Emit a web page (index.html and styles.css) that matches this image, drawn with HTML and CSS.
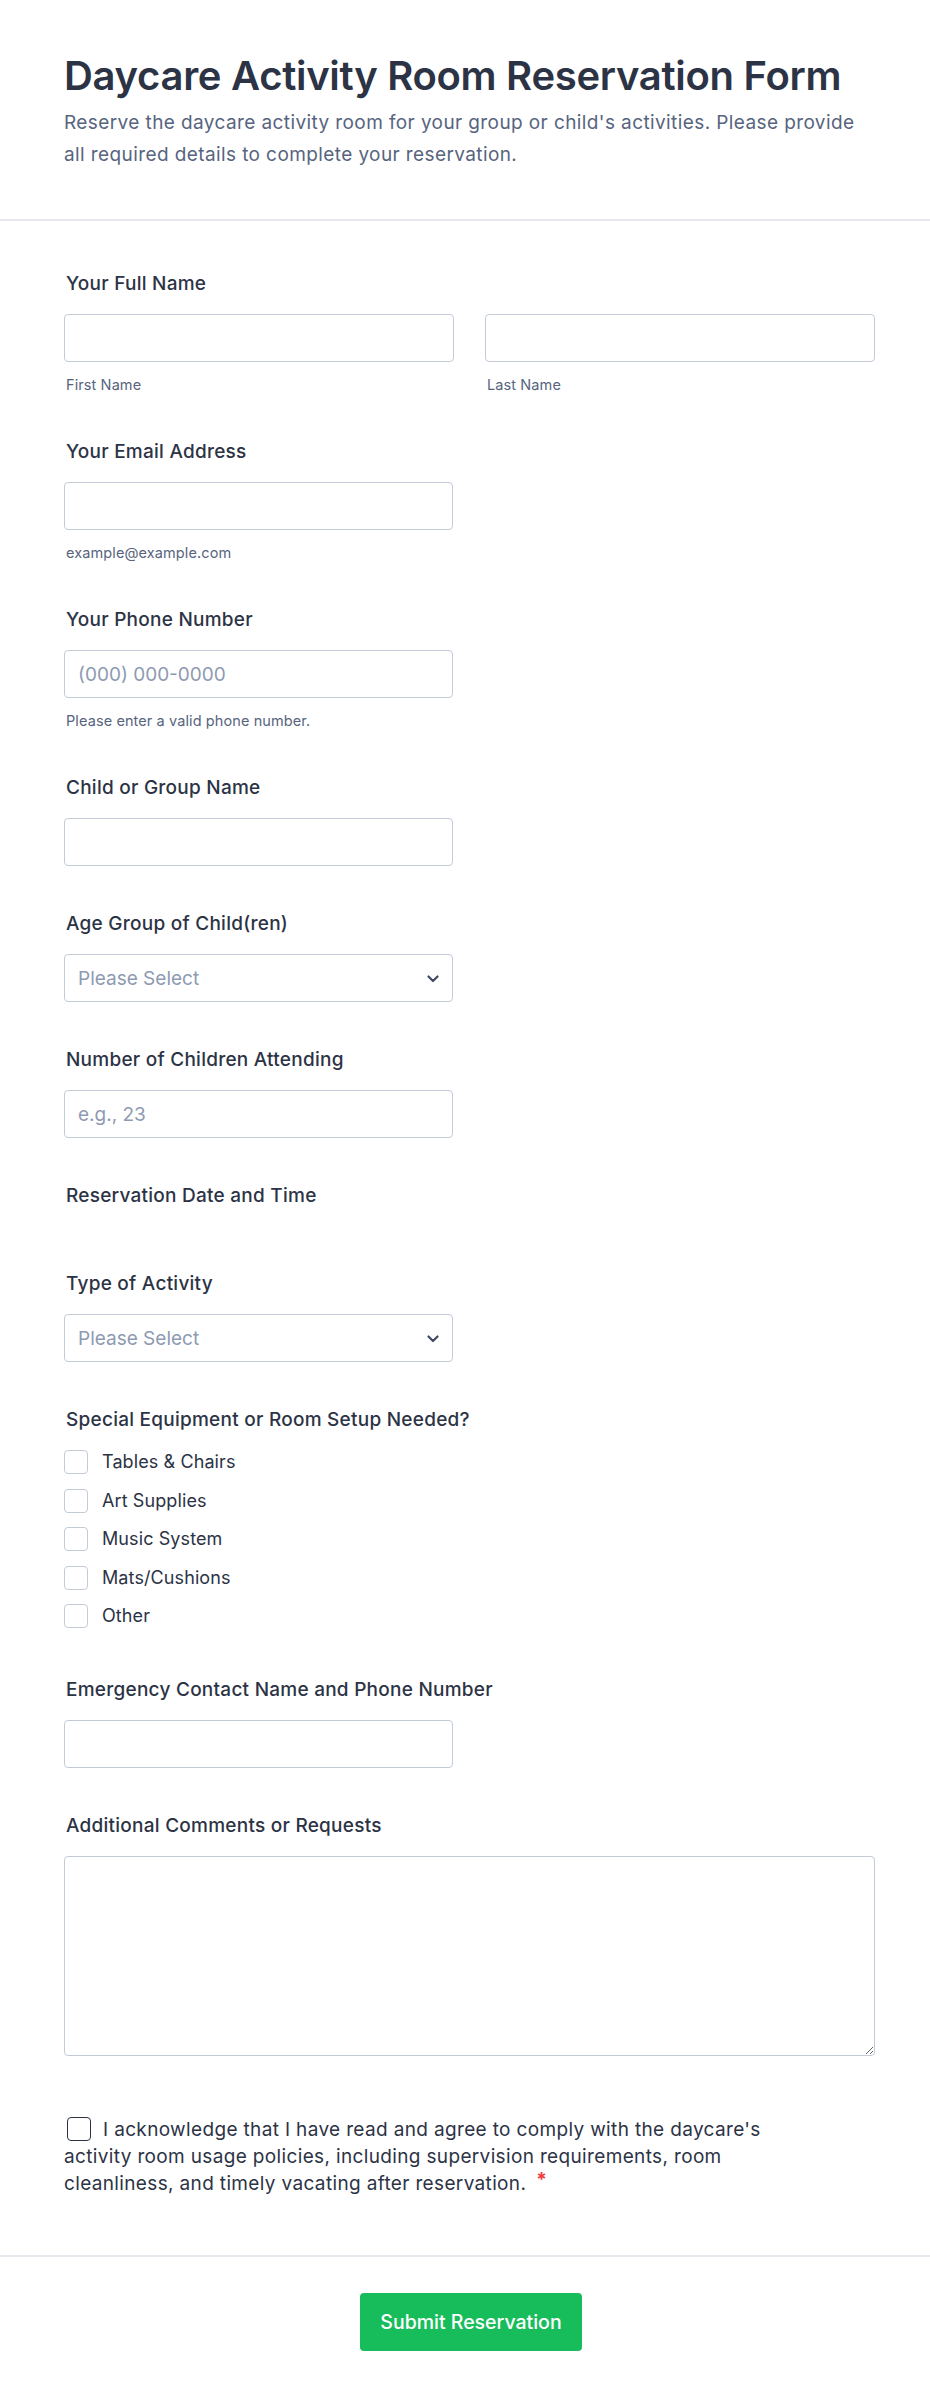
FILE: index.html
```html
<!DOCTYPE html>
<html lang="en">
<head>
<meta charset="utf-8">
<title>Daycare Activity Room Reservation Form</title>
<link rel="stylesheet" href="styles.css">
</head>
<body>
<header class="header">
  <h1 class="title">Daycare Activity Room Reservation Form</h1>
  <p class="desc">Reserve the daycare activity room for your group or child's activities. Please provide all required details to complete your reservation.</p>
</header>

<form class="form">
  <div class="field">
    <label class="label">Your Full Name</label>
    <div class="name-row">
      <div class="name-col">
        <input class="input" type="text">
        <div class="sublabel">First Name</div>
      </div>
      <div class="name-col">
        <input class="input" type="text">
        <div class="sublabel">Last Name</div>
      </div>
    </div>
  </div>

  <div class="field">
    <label class="label">Your Email Address</label>
    <input class="input half" type="email">
    <div class="sublabel">example@example.com</div>
  </div>

  <div class="field">
    <label class="label">Your Phone Number</label>
    <input class="input half" type="tel" placeholder="(000) 000-0000">
    <div class="sublabel">Please enter a valid phone number.</div>
  </div>

  <div class="field">
    <label class="label">Child or Group Name</label>
    <input class="input half" type="text">
  </div>

  <div class="field">
    <label class="label">Age Group of Child(ren)</label>
    <div class="select-wrap half">
      <select class="select"><option>Please Select</option></select>
      <svg class="chevron" viewBox="0 0 12 8" width="12" height="8"><path d="M1.5 1.5 L6 6 L10.5 1.5" fill="none" stroke="#3f4a62" stroke-width="2.2" stroke-linecap="round" stroke-linejoin="round"/></svg>
    </div>
  </div>

  <div class="field">
    <label class="label">Number of Children Attending</label>
    <input class="input half" type="text" placeholder="e.g., 23">
  </div>

  <div class="field">
    <label class="label">Reservation Date and Time</label>
    <div class="empty"></div>
  </div>

  <div class="field">
    <label class="label">Type of Activity</label>
    <div class="select-wrap half">
      <select class="select"><option>Please Select</option></select>
      <svg class="chevron" viewBox="0 0 12 8" width="12" height="8"><path d="M1.5 1.5 L6 6 L10.5 1.5" fill="none" stroke="#3f4a62" stroke-width="2.2" stroke-linecap="round" stroke-linejoin="round"/></svg>
    </div>
  </div>

  <div class="field">
    <label class="label">Special Equipment or Room Setup Needed?</label>
    <div class="checks">
      <div class="check"><input type="checkbox" class="box" id="c1"><label for="c1">Tables &amp; Chairs</label></div>
      <div class="check"><input type="checkbox" class="box" id="c2"><label for="c2">Art Supplies</label></div>
      <div class="check"><input type="checkbox" class="box" id="c3"><label for="c3">Music System</label></div>
      <div class="check"><input type="checkbox" class="box" id="c4"><label for="c4">Mats/Cushions</label></div>
      <div class="check"><input type="checkbox" class="box" id="c5"><label for="c5">Other</label></div>
    </div>
  </div>

  <div class="field">
    <label class="label">Emergency Contact Name and Phone Number</label>
    <input class="input half" type="text">
  </div>

  <div class="field">
    <label class="label">Additional Comments or Requests</label>
    <textarea class="textarea"></textarea>
  </div>

  <div class="field ack-field">
    <label class="ack"><input type="checkbox" class="ack-box">I acknowledge that I have read and agree to comply with the daycare's activity room usage policies, including supervision requirements, room cleanliness, and timely vacating after reservation.<span class="req">*</span></label>
  </div>
</form>

<footer class="footer">
  <button class="submit" type="button">Submit Reservation</button>
</footer>
</body>
</html>
```

FILE: styles.css
```css
* { box-sizing: border-box; }

html, body {
  margin: 0;
  padding: 0;
  background: #ffffff;
}

body {
  font-family: Inter, "Noto Sans", sans-serif;
  color: #2c3345;
}

.header {
  padding: 52px 64px 48px;
  border-bottom: 2px solid #e8e9ef;
}

.title {
  margin: 0;
  font-size: 40px;
  line-height: 48px;
  font-weight: 600;
  letter-spacing: -0.3px;
  color: #2c3345;
}

.desc {
  margin: 7px 0 0;
  font-size: 19px;
  line-height: 32px;
  letter-spacing: 0.4px;
  color: #57647e;
}

.form {
  display: flex;
  flex-direction: column;
  gap: 46px;
  padding: 51px 55px 58px 64px;
  border-bottom: 2px solid #e8e9ef;
}

.field {
  display: flex;
  flex-direction: column;
}

.label {
  display: block;
  font-size: 19px;
  line-height: 24px;
  font-weight: 500;
  letter-spacing: 0.25px;
  color: #2c3345;
  margin-bottom: 18px;
  padding-left: 2px;
}

.name-row {
  display: grid;
  grid-template-columns: 1fr 1fr;
  column-gap: 31px;
}

.name-col {
  display: flex;
  flex-direction: column;
}

.input,
.select,
.textarea {
  width: 100%;
  height: 48px;
  border: 1px solid #c3cad8;
  border-radius: 4px;
  background: #ffffff;
  font-family: Inter, "Noto Sans", sans-serif;
  font-size: 19px;
  color: #2c3345;
  padding: 0 13px;
  outline: none;
  margin: 0;
}

.input::placeholder {
  color: #8d9ab1;
}

.half {
  width: 389px;
}

.sublabel {
  margin-top: 14px;
  font-size: 14.5px;
  line-height: 18px;
  letter-spacing: 0.1px;
  color: #57647e;
  padding-left: 2px;
}

.select-wrap {
  position: relative;
}

.select {
  appearance: none;
  -webkit-appearance: none;
  color: #8d9ab1;
}

.chevron {
  position: absolute;
  right: 14px;
  top: 21px;
  pointer-events: none;
}

.empty {
  height: 0;
}

.checks {
  display: flex;
  flex-direction: column;
  gap: 14.5px;
  padding-bottom: 4px;
}

.check {
  display: flex;
  align-items: center;
  gap: 14px;
  height: 24px;
  font-size: 18px;
  line-height: 24px;
  letter-spacing: 0.1px;
  color: #2c3345;
}

.box {
  appearance: none;
  -webkit-appearance: none;
  width: 24px;
  height: 24px;
  margin: 0;
  border: 1px solid #c3cad8;
  border-radius: 4px;
  background: #ffffff;
  flex: none;
}

.textarea {
  height: 200px;
  padding: 12px 13px;
  resize: vertical;
  display: block;
}

.ack-field {
  margin-top: 14px;
}

.ack {
  display: block;
  max-width: 730px;
  font-size: 19px;
  line-height: 27px;
  letter-spacing: 0.35px;
  color: #2c3345;
}

.ack-box {
  appearance: none;
  -webkit-appearance: none;
  width: 24px;
  height: 24px;
  margin: 0 12px 0 3px;
  border: 1.5px solid #2c3345;
  border-radius: 4px;
  vertical-align: -5px;
  background: #ffffff;
}

.req {
  color: #f23a3c;
  font-weight: 700;
  margin-left: 10px;
  position: relative;
  top: -4px;
}

.footer {
  display: flex;
  justify-content: center;
  padding: 36px 55px 51px 67px;
}

.submit {
  height: 58px;
  padding: 0 20px;
  border: none;
  border-radius: 4px;
  background: #18bd5b;
  color: #ffffff;
  font-family: Inter, "Noto Sans", sans-serif;
  font-size: 19.5px;
  font-weight: 500;
  cursor: pointer;
}
```
